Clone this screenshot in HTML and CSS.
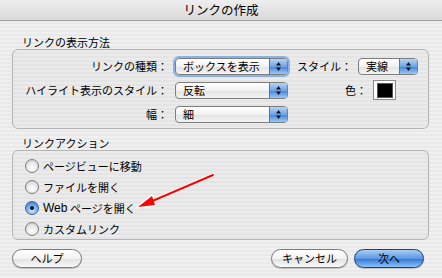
FILE: index.html
```html
<!DOCTYPE html>
<html lang="ja">
<head>
    <meta charset="UTF-8">
    <title>リンクの作成</title>
    <link rel="stylesheet" href="styles.css">
</head>
<body>

<div class="window">
    <div class="titlebar">リンクの作成</div>

    <div class="content">
        <div class="group-label">リンクの表示方法</div>
        <div class="group-box display-box">
            <div class="form-row">
                <span class="field-label">リンクの種類：</span>
                <div class="popup focused"><span class="popup-text">ボックスを表示</span><span class="popup-arrows"><svg width="7" height="11" viewBox="0 0 7 11"><path d="M3.5 1 L6 4.5 L1 4.5 Z M3.5 10 L6 6.5 L1 6.5 Z" fill="#111"/></svg></span></div>
                <div class="side">
                    <span class="side-label">スタイル：</span>
                    <div class="popup small"><span class="popup-text">実線</span><span class="popup-arrows"><svg width="7" height="11" viewBox="0 0 7 11"><path d="M3.5 1 L6 4.5 L1 4.5 Z M3.5 10 L6 6.5 L1 6.5 Z" fill="#111"/></svg></span></div>
                </div>
            </div>
            <div class="form-row">
                <span class="field-label">ハイライト表示のスタイル：</span>
                <div class="popup"><span class="popup-text">反転</span><span class="popup-arrows"><svg width="7" height="11" viewBox="0 0 7 11"><path d="M3.5 1 L6 4.5 L1 4.5 Z M3.5 10 L6 6.5 L1 6.5 Z" fill="#111"/></svg></span></div>
                <div class="side right">
                    <span class="side-label">色：</span>
                    <div class="color-well"><span class="swatch"></span></div>
                </div>
            </div>
            <div class="form-row">
                <span class="field-label">幅：</span>
                <div class="popup"><span class="popup-text">細</span><span class="popup-arrows"><svg width="7" height="11" viewBox="0 0 7 11"><path d="M3.5 1 L6 4.5 L1 4.5 Z M3.5 10 L6 6.5 L1 6.5 Z" fill="#111"/></svg></span></div>
            </div>
        </div>

        <div class="group-label second">リンクアクション</div>
        <div class="group-box action-box">
            <label class="radio-row"><span class="radio"></span>ページビューに移動</label>
            <label class="radio-row"><span class="radio"></span>ファイルを開く</label>
            <label class="radio-row"><span class="radio checked"></span><span class="latin">Web</span>&nbsp;ページを開く</label>
            <label class="radio-row"><span class="radio"></span>カスタムリンク</label>
        </div>

        <div class="button-row">
            <button class="btn help">ヘルプ</button>
            <button class="btn cancel">キャンセル</button>
            <button class="btn default">次へ</button>
        </div>
    </div>

    <!-- annotation arrow -->
    <svg class="annotation" width="442" height="278" viewBox="0 0 442 278">
        <line x1="213" y1="175" x2="150" y2="202" stroke="#fff" stroke-width="4" stroke-linecap="round"/>
        <path d="M138 207 L152 196 L155 205 Z" fill="#fff" stroke="#fff" stroke-width="3" stroke-linejoin="round"/>
        <line x1="213" y1="175" x2="150" y2="202" stroke="#f00" stroke-width="2" stroke-linecap="round"/>
        <path d="M138 207 L152 196 L155 205 Z" fill="#f00"/>
    </svg>
</div>

</body>
</html>
```

FILE: styles.css
```css
body {
    margin: 0;
    padding: 0;
    font-family: "Noto Sans CJK JP", "Noto Sans", sans-serif;
    font-size: 11px;
    color: #000;
}

.window {
    position: relative;
    width: 442px;
    height: 278px;
    overflow: hidden;
    background: repeating-linear-gradient(#f0f0f0 0, #f0f0f0 2px, #e9e9e9 2px, #e9e9e9 4px);
}

.titlebar {
    height: 20px;
    line-height: 20px;
    text-align: center;
    font-size: 12.5px;
    border-bottom: 1px solid #9a9a9a;
    background: linear-gradient(#eeeeee, #d9d9d9);
}

.content {
    padding: 0 13px 0 12px;
}

.group-label {
    margin: 14px 0 0 10px;
    height: 14px;
    line-height: 14px;
}

.group-label.second {
    margin-top: 7px;
}

.group-box {
    border: 1px solid #b4b4b4;
    border-radius: 6px;
    background: repeating-linear-gradient(#ebebeb 0, #ebebeb 2px, #e4e4e4 2px, #e4e4e4 4px);
}

.display-box {
    height: 78px;
    padding-top: 4px;
    box-sizing: content-box;
    height: 74px;
}

.form-row {
    display: flex;
    align-items: center;
    height: 24px;
}

.field-label {
    width: 155px;
    text-align: right;
}

.popup {
    display: flex;
    margin-left: 7px;
    width: 113px;
    height: 17px;
    box-sizing: border-box;
    border: 1px solid #7d7d7d;
    border-radius: 4px;
    background: linear-gradient(#ffffff, #f1f1f1 50%, #e2e2e2 51%, #f4f4f4);
    overflow: hidden;
}

.popup.focused {
    box-shadow: 0 0 0 2px rgba(110, 160, 225, 0.75);
}

.popup.small {
    width: 60px;
    margin-left: auto;
}

.popup-text {
    flex: 1;
    padding-left: 7px;
    line-height: 15px;
}

.popup-arrows {
    width: 17px;
    display: flex;
    align-items: center;
    justify-content: center;
    border-left: 1px solid #5577aa;
    background: linear-gradient(#b6d3f5, #6ea4e6 50%, #3f83dc 51%, #9cc8f7);
}

.side {
    display: flex;
    align-items: center;
    margin-left: 9px;
    width: 121px;
}

.side.right .side-label {
    margin-left: auto;
}

.color-well {
    margin: 0 22px 0 6px;
    width: 23px;
    height: 20px;
    box-sizing: border-box;
    border: 1px solid #8a8a8a;
    background: #fff;
    display: flex;
    align-items: center;
    justify-content: center;
}

.swatch {
    width: 14px;
    height: 13px;
    background: #000;
    border: 1px solid #555;
}

.action-box {
    padding: 4px 0 0 12px;
    height: 84px;
}

.radio-row {
    display: flex;
    align-items: center;
    height: 21px;
}

.radio {
    width: 14px;
    height: 14px;
    box-sizing: border-box;
    margin-right: 4px;
    border-radius: 50%;
    border: 1px solid #7a7a7a;
    background: radial-gradient(circle at 50% 70%, #ffffff, #e8e8e8 55%, #c4c4c4);
    display: flex;
    align-items: center;
    justify-content: center;
}

.radio.checked {
    border-color: #3a5e99;
    background: radial-gradient(circle at 50% 75%, #c9e6ff, #6fa9ec 55%, #2f6ac9);
}

.radio.checked::after {
    content: "";
    width: 4px;
    height: 4px;
    border-radius: 50%;
    background: #111;
}

.latin {
    font-family: "Liberation Sans", sans-serif;
    font-size: 12px;
}

.button-row {
    display: flex;
    margin-top: 9px;
}

.btn {
    height: 19px;
    padding: 0;
    font-family: inherit;
    font-size: 11px;
    line-height: 17px;
    border: 1px solid #7a7a7a;
    border-radius: 10px;
    background: linear-gradient(#ffffff, #f3f3f3 50%, #e0e0e0 51%, #fafafa);
    box-shadow: 0 1px 1px rgba(0, 0, 0, 0.2);
}

.btn.help {
    width: 70px;
}

.btn.cancel {
    width: 77px;
    margin-left: auto;
}

.btn.default {
    width: 70px;
    margin-left: 6px;
    margin-right: 5px;
    border-color: #1f3f7a;
    background: linear-gradient(#a9ccf4, #5d98e3 50%, #2e72d6 51%, #8fc4f8);
}

.annotation {
    position: absolute;
    left: 0;
    top: 0;
    pointer-events: none;
}
```
